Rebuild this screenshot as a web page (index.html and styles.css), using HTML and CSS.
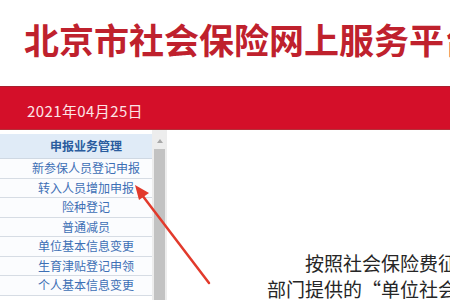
FILE: index.html
```html
<!DOCTYPE html>
<html lang="zh-CN">
<head>
<meta charset="utf-8">
<title>北京市社会保险网上服务平台</title>
<link rel="stylesheet" href="styles.css">
</head>
<body>
<div class="page">
  <header class="top">
    <h1 class="title">北京市社会保险网上服务平台</h1>
  </header>
  <div class="band">
    <span class="date">2021年04月25日</span>
  </div>
  <div class="main">
    <nav class="menu">
      <div class="menu-head">申报业务管理</div>
      <a class="menu-item">新参保人员登记申报</a>
      <a class="menu-item">转入人员增加申报</a>
      <a class="menu-item">险种登记</a>
      <a class="menu-item">普通减员</a>
      <a class="menu-item">单位基本信息变更</a>
      <a class="menu-item">生育津贴登记申领</a>
      <a class="menu-item">个人基本信息变更</a>
    </nav>
    <div class="scroll">
      <div class="scroll-up"></div>
      <div class="scroll-thumb"></div>
    </div>
    <div class="content">
      <p class="para">按照社会保险费征缴经办机构的要求，根据<br>部门提供的“单位社会保险登记信息”</p>
    </div>
  </div>
  <svg class="arrow" width="450" height="300" viewBox="0 0 450 300">
    <line x1="209" y1="283" x2="142" y2="195" stroke="#e23a2c" stroke-width="2.5" stroke-linecap="round"/>
    <polygon points="135,185 149,193 139,200" fill="#e23a2c"/>
  </svg>
</div>
</body>
</html>
```
FILE: styles.css
```css
html, body {
  margin: 0;
  padding: 0;
  background: #ffffff;
  overflow: hidden;
}
.page {
  position: relative;
  width: 450px;
  height: 300px;
  overflow: hidden;
  font-family: "Noto Sans CJK SC", "Noto Sans", sans-serif;
}
.top {
  height: 86px;
  box-sizing: border-box;
  padding: 21px 0 0 24px;
}
.title {
  margin: 0;
  font-size: 35px;
  line-height: 36px;
  font-weight: 700;
  color: #bf212d;
  white-space: nowrap;
}
.band {
  height: 44px;
  box-sizing: border-box;
  background: #d40f29;
  border-top: 1px solid #a8202e;
  border-bottom: 1px solid #b5303a;
  padding: 11px 0 0 27px;
}
.date {
  font-size: 15px;
  line-height: 20px;
  letter-spacing: 0.4px;
  color: #fde4e6;
}
.main {
  display: flex;
  align-items: flex-start;
  height: 170px;
}
.menu {
  width: 152px;
  flex: none;
  padding-top: 3px;
  box-sizing: border-box;
  background: #ffffff;
  display: flex;
  flex-direction: column;
}
.menu-head {
  height: 24px;
  margin-top: 1px;
  padding-left: 20px;
  background: #e0ebf7;
  border-bottom: 1px solid #cfd8e3;
  font-size: 12px;
  line-height: 24px;
  font-weight: 700;
  color: #2a5c9e;
  text-align: center;
}
.menu-item {
  display: block;
  height: 18.5px;
  padding-left: 20px;
  background: #fbfcfe;
  border-bottom: 1px solid #d6dce4;
  font-size: 12px;
  line-height: 18.5px;
  color: #3d6fb5;
  text-align: center;
  white-space: nowrap;
}
.scroll {
  width: 15px;
  flex: none;
  height: 170px;
  background: #ededed;
  display: flex;
  flex-direction: column;
  align-items: center;
}
.scroll-up {
  margin-top: 9px;
  width: 0;
  height: 0;
  border-left: 3px solid transparent;
  border-right: 3px solid transparent;
  border-bottom: 4px solid #a8a8a8;
}
.scroll-thumb {
  margin-top: 6px;
  width: 11px;
  flex: 1;
  background: #c2c2c2;
}
.content {
  flex: 1;
  padding: 120px 0 0 100px;
  min-width: 0;
}
.para {
  margin: 0;
  font-size: 19px;
  line-height: 26px;
  text-indent: 2em;
  color: #262626;
  white-space: nowrap;
}
.arrow {
  position: absolute;
  left: 0;
  top: 0;
  pointer-events: none;
}
```
